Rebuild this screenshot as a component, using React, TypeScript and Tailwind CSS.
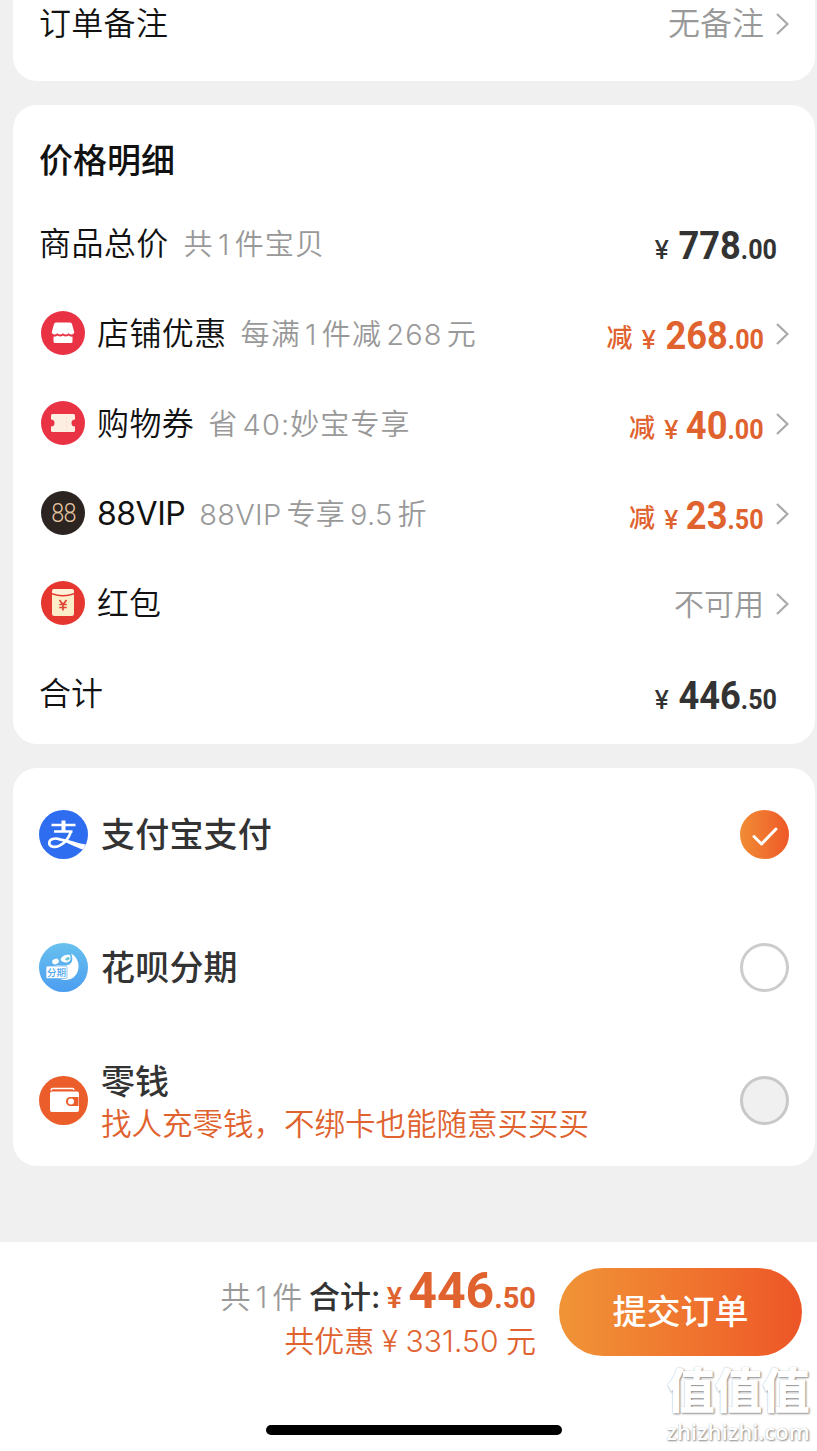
import React from 'react';

const Chevron: React.FC = () => (
  <svg className="mb-px h-6 w-[13px] shrink-0" viewBox="0 0 13 24" fill="none" stroke="#aaaaaa" strokeWidth="2.3">
    <path d="M1 2 L11.400 12 L1 22" />
  </svg>
);

const ShopIcon = () => (
  <svg className="mb-0.5 size-11" viewBox="0 0 44 44">
    <circle cx="22" cy="22" r="22" fill="#e93345" />
    <path d="M15 11.500h14a2 2 0 0 1 2 1.500l2.300 8.500c-1.300 2.500-3.800 2.700-5.600.8-1.700 1.700-4 1.700-5.700 0-1.700 1.700-4 1.700-5.700 0-1.800 1.900-4.300 1.700-5.600-.8l2.300-8.500a2 2 0 0 1 2-1.500z" fill="#fff" />
    <path d="M12.500 25.500c1.500.4 2.800 0 4-1 1.700 1.300 3.800 1.300 5.500 0 1.700 1.300 3.800 1.300 5.500 0 1.200 1 2.500 1.400 4 1v5a1.500 1.500 0 0 1-1.500 1.500h-16a1.500 1.500 0 0 1-1.500-1.500z" fill="#fff" />
  </svg>
);

const CouponIcon = () => (
  <svg className="mb-0.5 size-11" viewBox="0 0 44 44">
    <circle cx="22" cy="22" r="22" fill="#e93345" />
    <path d="M11.500 13h21a1.500 1.500 0 0 1 1.500 1.500v4a3.500 3.500 0 0 0 0 7v4a1.500 1.500 0 0 1-1.500 1.500h-21a1.500 1.500 0 0 1-1.500-1.500v-4a3.500 3.500 0 0 0 0-7v-4a1.500 1.500 0 0 1 1.500-1.500z" fill="#fdeee2" />
    <path d="M25.500 16v13" stroke="#f8dccf" strokeWidth="1.200" strokeDasharray="2 2" />
  </svg>
);

const VipIcon = () => (
  <span className="mb-0.5 flex size-11 items-center justify-center rounded-full bg-[#2b2420] font-['Roboto',sans-serif] text-[26px] leading-none font-light text-[#e3c3a0]">
    <span className="scale-x-90 tracking-[-1px]">88</span>
  </span>
);

const PacketIcon = () => (
  <svg className="mb-0.5 size-11" viewBox="0 0 44 44">
    <circle cx="22" cy="22" r="22" fill="#e5372f" />
    <path d="M13 8h18a2 2 0 0 1 2 2v2q-11 4-22 0v-2a2 2 0 0 1 2-2z" fill="#fff2da" />
    <path d="M11 13.500q11 4 22 0v19a2.500 2.500 0 0 1-2.500 2.500h-17a2.500 2.500 0 0 1-2.500-2.500z" fill="#fdecc8" />
    <path d="M18.500 19l3.500 4.500 3.500-4.500M22 23.500v6M18.300 23.500h7.400M18.300 26.500h7.400" fill="none" stroke="#dd4634" strokeWidth="1.700" />
  </svg>
);

const AlipayIcon = () => (
  <svg className="size-[49px]" viewBox="0 0 49 49">
    <defs>
      <clipPath id="alipay">
        <circle cx="24.500" cy="24.500" r="24.500" />
      </clipPath>
    </defs>
    <circle cx="24.500" cy="24.500" r="24.500" fill="#2f6df0" />
    <g clipPath="url(#alipay)" fill="none" stroke="#fff">
      <path d="M24.500 10.500v11" strokeWidth="4" />
      <path d="M12.500 15h24M15 21.500h18.500" strokeWidth="2.300" />
      <path d="M32 21.500c-2 6-6 11-10.500 13.700-5 2.900-11.300 2-11.300-2.200 0-4 5.500-5.500 11-3.800" strokeWidth="2.600" />
      <path d="M17 28c9-.3 17.500 4.500 30 6.500l-2 5.200c-10-2.600-16.500-8-28-10z" fill="#fff" stroke="none" />
    </g>
  </svg>
);

const HuabeiIcon = () => (
  <svg className="size-[49px]" viewBox="0 0 49 49">
    <defs>
      <linearGradient id="huabei" x1="0" y1="0" x2="0" y2="1">
        <stop offset="0" stopColor="#67c1ee" />
        <stop offset="1" stopColor="#4c9df0" />
      </linearGradient>
    </defs>
    <circle cx="24.500" cy="24.500" r="24.500" fill="url(#huabei)" />
    <path d="M32 10.500c5.500 3 8.500 9 7.300 15.500C38 33.500 32 37.500 25 37l-8-2-2-12c4-1.500 8 0 12-.5 6-.8 8-5.500 5-12z" fill="#fff" />
    <ellipse cx="16.500" cy="18.500" rx="3.400" ry="2.700" fill="#fff" transform="rotate(-20 16.500 18.500)" />
    <path d="M21.500 17c.5-3.500 4-5.500 9-5.300 1.500 2 1.500 4.300.3 6-2.300 2.600-7 2.300-9.300-.7z" fill="#fff" />
    <ellipse cx="28.500" cy="15.800" rx="2.400" ry="1.500" fill="#6cc6d8" transform="rotate(-20 28.500 15.800)" />
    <rect x="7" y="23" width="21" height="12.500" rx="1.500" fill="#fff" stroke="#5cadf0" strokeWidth=".7" />
    <text x="8" y="32.800" fontSize="9.500" fontFamily="Noto Sans CJK SC, sans-serif" fill="#54a8ee">分期</text>
  </svg>
);

const WalletIcon = () => (
  <svg className="size-[49px]" viewBox="0 0 49 49">
    <circle cx="24.500" cy="24.500" r="24.500" fill="#eb5d2b" />
    <path d="M12 14.500a2 2 0 0 1 2-2h19.500a1.500 1.500 0 0 1 1.500 1.500" fill="none" stroke="#fff" strokeWidth="1.300" />
    <path d="M13 15.500h25a2 2 0 0 1 2 2v16.500a2 2 0 0 1-2 2h-25a2 2 0 0 1-2-2v-16.500a2 2 0 0 1 2-2z" fill="#fff" />
    <path d="M31.500 21h8v9h-8a4.500 4.500 0 0 1 0-9z" fill="#eb5d2b" />
    <circle cx="32" cy="25.500" r="3" fill="#fff" />
  </svg>
);

const DISCOUNTS = [
  { icon: <ShopIcon />, label: '店铺优惠', hint: '每满 1 件减 268 元', yuan: '268', cents: '.00' },
  { icon: <CouponIcon />, label: '购物券', hint: '省 40:妙宝专享', yuan: '40', cents: '.00' },
  {
    icon: <VipIcon />,
    label: '88VIP',
    hint: '88VIP 专享 9.5 折',
    yuan: '23',
    cents: '.50',
    labelClass: 'font-normal tracking-[-0.5px]',
    hintClass: 'tracking-[0.3px] [word-spacing:-3.5px]',
  },
];

const Price: React.FC<{ yuan: string; cents: string }> = ({ yuan, cents }) => (
  <span className="flex items-baseline leading-none">
    <span className="mr-0.5 text-[26px] font-medium">¥</span>
    <span className="origin-right scale-x-[0.93] font-['Roboto',sans-serif] font-bold">
      <span className="text-[39px]">{yuan}</span>
      <span className="text-[27px]">{cents}</span>
    </span>
  </span>
);

const Hint: React.FC<{ className?: string; children: React.ReactNode }> = ({
  className = 'tracking-[1.1px] [word-spacing:-5px]',
  children,
}) => <span className={`text-[29px] text-[#999999] ${className}`}>{children}</span>;

const App: React.FC = () => {
  return (
    <div className="relative flex h-[1451px] w-[817px] flex-col overflow-hidden bg-[#f0f0f0] font-['Inter','Noto_Sans_CJK_SC',sans-serif] text-[32px] leading-none font-[350] whitespace-nowrap text-[#111111]">
      <main className="flex flex-1 flex-col gap-6 pr-0.5 pl-[13px]">
        {/* Order note */}
        <section className="flex h-[81px] justify-between rounded-b-3xl bg-white px-[26px] pt-2">
          <span className="tracking-[0.3px]">订单备注</span>
          <span className="flex h-8 items-center gap-3 text-[#999999]">
            无备注
            <Chevron />
          </span>
        </section>

        {/* Price details */}
        <section className="h-[639px] rounded-3xl bg-white px-[26px] pt-[38px]">
          <h2 className="text-[34px] leading-[36px] font-medium">价格明细</h2>
          <div className="mt-5 flex h-[90px] items-center justify-between pr-3">
            <span className="flex items-baseline gap-[15px]">
              <span className="tracking-[0.4px]">商品总价</span>
              <Hint>共 1 件宝贝</Hint>
            </span>
            <span className="pt-1 text-[#333333]">
              <Price yuan="778" cents=".00" />
            </span>
          </div>
          {DISCOUNTS.map((d) => (
            <div key={d.label} className="flex h-[90px] items-center justify-between">
              <div className="flex items-center pl-0.5">
                {d.icon}
                <span className="ml-3 flex items-baseline gap-[14px]">
                  <span className={d.labelClass ?? 'tracking-[0.4px]'}>{d.label}</span>
                  <Hint className={d.hintClass}>{d.hint}</Hint>
                </span>
              </div>
              <div className="flex items-center gap-3">
                <span className="flex items-baseline gap-[9px] pt-1 text-[#e0622e]">
                  <span className="relative -top-0.5 text-[26px] font-medium">减</span>
                  <Price yuan={d.yuan} cents={d.cents} />
                </span>
                <Chevron />
              </div>
            </div>
          ))}
          <div className="flex h-[90px] items-center justify-between">
            <div className="flex items-center gap-3 pl-0.5">
              <PacketIcon />
              <span>红包</span>
            </div>
            <span className="flex items-center gap-3 text-[30px] text-[#999999]">
              不可用
              <Chevron />
            </span>
          </div>
          <div className="flex h-[90px] items-center justify-between pr-3">
            <span>合计</span>
            <span className="pt-1 text-[#333333]">
              <Price yuan="446" cents=".50" />
            </span>
          </div>
        </section>

        {/* Payment methods */}
        <section className="h-[398px] rounded-3xl bg-white px-[26px] text-[34px] font-medium text-[#333333]">
          <div className="flex h-[133px] items-center gap-[13px]">
            <AlipayIcon />
            <span className="flex-1 tracking-[0.2px]">支付宝支付</span>
            <span className="flex size-[49px] items-center justify-center rounded-full bg-linear-to-r from-[#f08c35] to-[#ee5728]">
              <svg className="size-7" viewBox="0 0 28 28" fill="none" stroke="#fff" strokeWidth="3" strokeLinecap="round" strokeLinejoin="round">
                <path d="M3 15.500l7.500 7.500L25 8" />
              </svg>
            </span>
          </div>
          <div className="flex h-[133px] items-center gap-[13px]">
            <HuabeiIcon />
            <span className="flex-1 tracking-[0.2px]">花呗分期</span>
            <span className="size-[49px] rounded-full border-[3px] border-[#cccccc]" />
          </div>
          <div className="flex h-[133px] items-center gap-[13px]">
            <WalletIcon />
            <span className="flex flex-1 flex-col gap-2.5 pt-1">
              <span>零钱</span>
              <span className="text-[30.5px] font-[350] text-[#e0622e]">找人充零钱，不绑卡也能随意买买买</span>
            </span>
            <span className="size-[49px] rounded-full border-[3px] border-[#c8c8c8] bg-[#f0f0f0]" />
          </div>
        </section>
      </main>

      {/* Submit bar */}
      <footer className="flex h-[209px] flex-col bg-white">
        <div className="flex items-start justify-end pt-[26px] pr-[15px]">
          <div className="-mt-0.5 mr-[23px] flex flex-col items-end">
            <div className="flex items-baseline">
              <span className="text-[30px] tracking-[0.8px] [word-spacing:-5px] text-[#999999]">共 1 件</span>
              <span className="ml-1.5 text-[31px] font-medium text-[#333333]">合计:</span>
              <span className="mr-1.5 ml-1.5 text-[28px] font-semibold text-[#e0622e]">¥</span>
              <span className="font-['Roboto',sans-serif] font-bold text-[#e0622e]">
                <span className="text-[50px]">446</span>
                <span className="text-[29px]">.50</span>
              </span>
            </div>
            <span className="mt-2.5 text-[30px] tracking-[0.1px] [word-spacing:-1.2px] text-[#e0622e]">共优惠 ¥ 331.50 元</span>
          </div>
          <button className="h-[88px] w-[243px] rounded-full bg-linear-to-r from-[#f09437] to-[#ed5527] text-[34px] font-medium text-white">
            提交订单
          </button>
        </div>
        <div className="mt-auto mb-4 ml-[266px] h-2.5 w-[296px] rounded-full bg-black" />
      </footer>

      {/* Watermark */}
      <div className="absolute right-2 bottom-2 flex w-[142px] flex-col items-center text-white [text-shadow:1px_1px_2px_#888888,0_0_1px_#bbbbbb]">
        <span className="text-[48px] leading-[42px] font-black tracking-[-0.5px]">值值值</span>
        <span className="mt-[7px] font-['Open_Sans',sans-serif] text-[22px] leading-6 font-semibold">zhizhizhi.com</span>
      </div>
    </div>
  );
};

export default App;
